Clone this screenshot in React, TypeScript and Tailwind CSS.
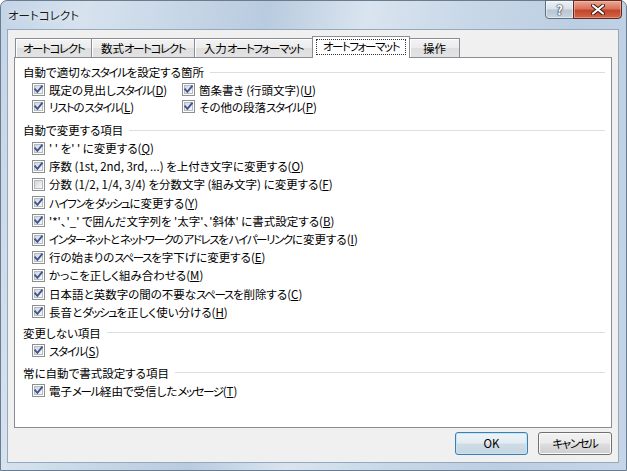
import React from "react";

const FONT = "[font-family:'Noto_Sans_CJK_JP','Noto_Sans',sans-serif] [font-feature-settings:'palt']";

function T({ s }: { s: string }) {
  const parts = s.split(/([\u30A0-\u30FF]+)/);
  return (
    <>
      {parts.map((p, i) =>
        /[\u30A0-\u30FF]/.test(p) ? (
          <span key={i} className="tracking-[-1.4px]">
            {p}
          </span>
        ) : (
          <React.Fragment key={i}>{p}</React.Fragment>
        )
      )}
    </>
  );
}

function CheckBox({ checked }: { checked: boolean }) {
  return (
    <svg width="13" height="13" viewBox="0 0 13 13" className="shrink-0">
      <defs>
        <linearGradient id="cbInner" x1="0" y1="0" x2="1" y2="1">
          <stop offset="0" stopColor="#cfd3d8" />
          <stop offset="1" stopColor="#fbfbfb" />
        </linearGradient>
      </defs>
      <rect x="0.5" y="0.5" width="12" height="12" fill="#fdfdfd" stroke="#8e8f8f" />
      <rect x="2.5" y="2.5" width="8" height="8" fill="url(#cbInner)" stroke="#b7bbc0" />
      {checked && (
        <path d="M3.2 6.4 L5.4 8.8 L9.9 3.4" fill="none" stroke="#3d5595" strokeWidth="1.9" strokeLinecap="square" />
      )}
    </svg>
  );
}

function Label({ text, k }: { text: string; k: string }) {
  return (
    <span className="whitespace-nowrap">
      <T s={text} />(<u className="underline underline-offset-[1px]">{k}</u>)
    </span>
  );
}

function Row({ text, k, checked = true, h = "h-[18px]" }: { text: string; k: string; checked?: boolean; h?: string }) {
  return (
    <div className={`flex items-center gap-[4px] ${h}`}>
      <CheckBox checked={checked} />
      <Label text={text} k={k} />
    </div>
  );
}

function Header({ text }: { text: string }) {
  return (
    <div className="flex items-center h-[18px] gap-[6px]">
      <span className="whitespace-nowrap">
        <T s={text} />
      </span>
      <div className="flex-1 h-px bg-[#d5dfe5]" />
    </div>
  );
}

function Tab({ label, w, selected = false, extra = "" }: { label: string; w: string; selected?: boolean; extra?: string }) {
  if (selected) {
    return (
      <div
        className={`relative z-10 -mb-px h-[22px] ${w} bg-white border-l border-t border-r border-[#898c95] flex items-start justify-center pt-[3px] ${extra}`}
      >
        <span className="flex-1 mx-[4px] text-center leading-[13px] h-[14px] outline outline-1 outline-dotted outline-[#333] outline-offset-0 whitespace-nowrap">
          <T s={label} />
        </span>
      </div>
    );
  }
  return (
    <div
      className={`h-[19px] ${w} border-t border-[#898c95] bg-[linear-gradient(#f3f3f3_0%,#ebebeb_50%,#dedede_51%,#e3e3e3_100%)] flex items-center justify-center shadow-[inset_1px_1px_0_#ffffff] ${extra}`}
    >
      <span className="whitespace-nowrap">
        <T s={label} />
      </span>
    </div>
  );
}

export default function App() {
  return (
    <div className={`w-[627px] h-[471px] overflow-hidden text-[11.5px] leading-[18px] text-black ${FONT}`}>
      <div className="relative w-full h-full rounded-t-[7px] border border-[#6a7c8f] bg-[linear-gradient(100deg,#c3d4e7_0%,#d6e2ee_12%,#c8d7e7_25%,#b9cbdf_38%,#d9e4ef_52%,#c9d8e8_66%,#bccee2_82%,#c6d6e8_100%)] flex flex-col">
        {/* Title bar */}
        <div className="relative h-[28px] shrink-0 flex items-center pl-[7px]">
          <span className="text-[11.5px] text-[#1a1a1a] [text-shadow:0_0_6px_rgba(255,255,255,0.9)]">オートコレクト</span>
          <div className="absolute right-[4px] -top-px flex">
            <div className="w-[29px] h-[19px] rounded-bl-[4px] border border-[#5f6f80] bg-[linear-gradient(#eef2f6_0%,#d9e2ea_45%,#b9c6d3_55%,#c9d4df_100%)] flex items-center justify-center shadow-[inset_0_0_0_1px_rgba(255,255,255,0.5)]">
              <span className="text-[13px] font-bold leading-none text-white [text-shadow:0_0_1px_#2b3a4a,0_0_1px_#2b3a4a,0_0_2px_#2b3a4a]">?</span>
            </div>
            <div className="w-[49px] h-[19px] -ml-px rounded-br-[4px] border border-[#5a2a22] bg-[linear-gradient(#eaa894_0%,#d9735c_45%,#c5452a_55%,#d06546_100%)] flex items-center justify-center shadow-[inset_0_0_0_1px_rgba(255,200,180,0.5)]">
              <svg width="14" height="11" viewBox="0 0 14 11">
                <path d="M2 1.5 L12 9.5 M12 1.5 L2 9.5" stroke="#3a1a14" strokeWidth="4" strokeLinecap="round" />
                <path d="M2 1.5 L12 9.5 M12 1.5 L2 9.5" stroke="#ffffff" strokeWidth="2.2" strokeLinecap="round" />
              </svg>
            </div>
          </div>
        </div>

        {/* Client */}
        <div className="flex-1 mx-[6px] mb-[7px] mr-[7px] border border-[#97a8ba] bg-[#f0f0f0] flex flex-col">
          {/* Tabs */}
          <div className="mt-[6px] ml-[7px] h-[21px] flex items-end">
            <Tab label="オートコレクト" w="w-[76px]" extra="border-l" />
            <Tab label="数式オートコレクト" w="w-[103px]" extra="border-l" />
            <Tab label="入力オートフォーマット" w="w-[118px]" extra="border-l" />
            <Tab label="オートフォーマット" w="w-[98px]" selected />
            <Tab label="操作" w="w-[50px]" extra="border-r border-[#898c95]" />
          </div>

          {/* Panel */}
          <div className="mx-[6px] h-[371px] border border-[#898c95] bg-white pt-[5px] pl-[8px] pr-[6px] flex flex-col">
            <Header text="自動で適切なスタイルを設定する箇所" />
            <div className="pl-[9px] flex">
              <div className="w-[150px] flex flex-col">
                <Row text="既定の見出しスタイル" k="D" h="h-[17px]" />
                <Row text="リストのスタイル" k="L" h="h-[17px]" />
              </div>
              <div className="flex flex-col">
                <Row text="箇条書き (行頭文字)" k="U" h="h-[17px]" />
                <Row text="その他の段落スタイル" k="P" h="h-[17px]" />
              </div>
            </div>

            <div className="mt-[6px]">
              <Header text="自動で変更する項目" />
            </div>
            <div className="pl-[9px] flex flex-col">
              <Row text={"' ' を' ' に変更する"} k="Q" h="h-[18.2px]" />
              <Row text="序数 (1st, 2nd, 3rd, ...) を上付き文字に変更する" k="O" h="h-[18.2px]" />
              <Row text="分数 (1/2, 1/4, 3/4) を分数文字 (組み文字) に変更する" k="F" checked={false} h="h-[18.2px]" />
              <Row text="ハイフンをダッシュに変更する" k="Y" h="h-[18.2px]" />
              <Row text="'*'、'_' で囲んだ文字列を '太字'、'斜体' に書式設定する" k="B" h="h-[18.2px]" />
              <Row text="インターネットとネットワークのアドレスをハイパーリンクに変更する" k="I" h="h-[18.2px]" />
              <Row text="行の始まりのスペースを字下げに変更する" k="E" h="h-[18.2px]" />
              <Row text="かっこを正しく組み合わせる" k="M" h="h-[18.2px]" />
              <Row text="日本語と英数字の間の不要なスペースを削除する" k="C" h="h-[18.2px]" />
              <Row text="長音とダッシュを正しく使い分ける" k="H" h="h-[18.2px]" />
            </div>

            <div className="mt-[3px]">
              <Header text="変更しない項目" />
            </div>
            <div className="pl-[9px] flex flex-col">
              <Row text="スタイル" k="S" />
            </div>

            <div className="mt-[4px]">
              <Header text="常に自動で書式設定する項目" />
            </div>
            <div className="pl-[9px] flex flex-col">
              <Row text="電子メール経由で受信したメッセージ" k="T" />
            </div>
          </div>

          {/* Buttons */}
          <div className="mt-[4px] mr-[6px] flex justify-end gap-[10px]">
            <button className="w-[73px] h-[23px] rounded-[3px] border border-[#3c7fb1] bg-[linear-gradient(#eef4f8_0%,#e3ecf2_48%,#cfdce6_52%,#c6d5e1_100%)] shadow-[inset_0_0_0_1px_#c7e4f6] flex items-center justify-center leading-none">
              OK
            </button>
            <button className="w-[74px] h-[23px] rounded-[3px] border border-[#707070] bg-[linear-gradient(#f2f2f2_0%,#ebebeb_48%,#dddddd_52%,#cfcfcf_100%)] shadow-[inset_0_0_0_1px_#fbfbfb] flex items-center justify-center leading-none">
              <T s="キャンセル" />
            </button>
          </div>
        </div>
      </div>
    </div>
  );
}
